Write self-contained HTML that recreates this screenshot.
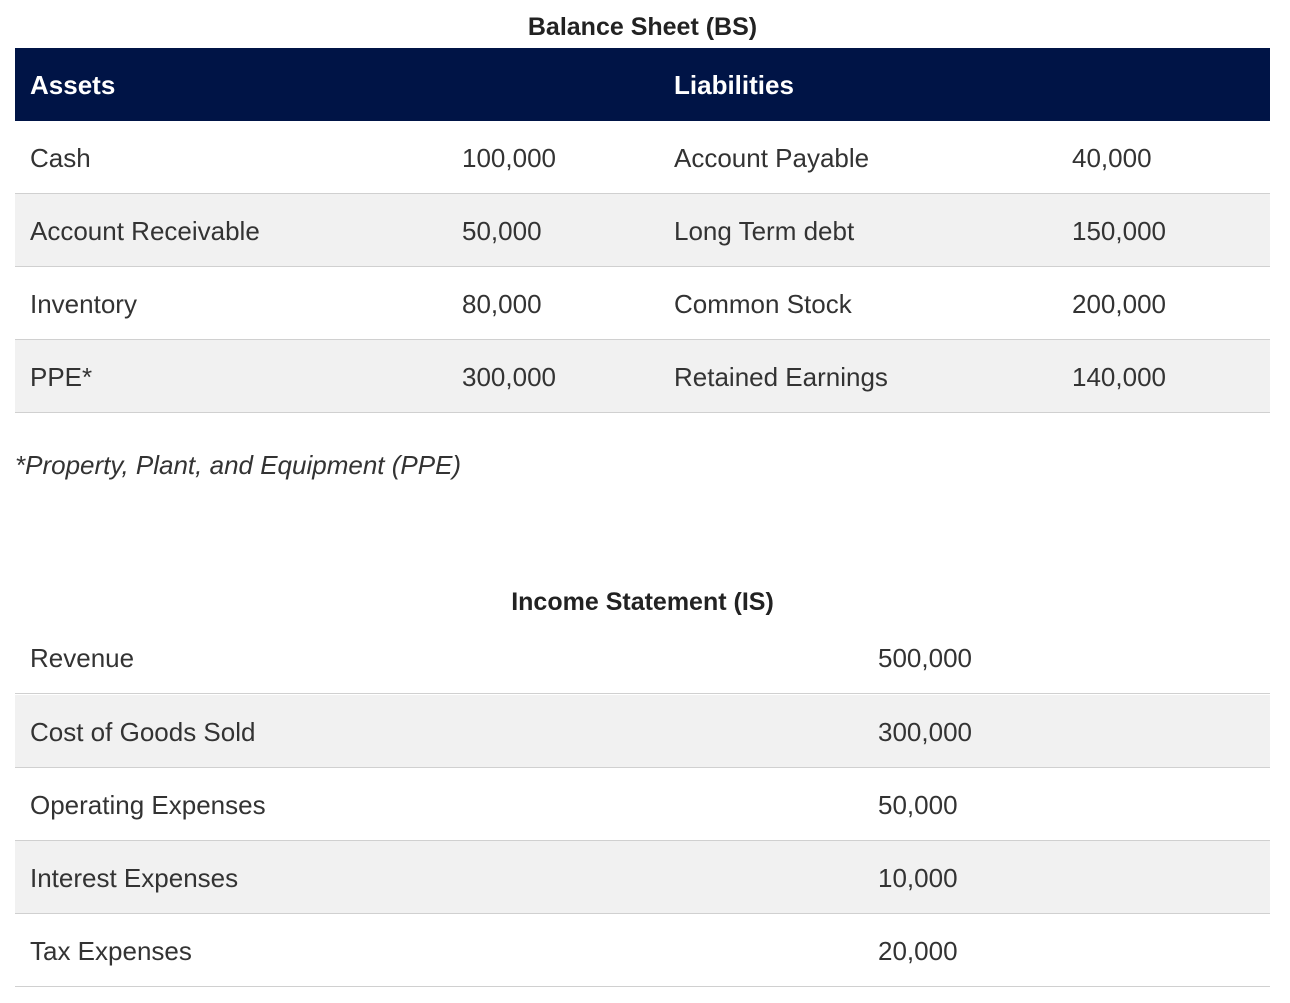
<!DOCTYPE html>
<html><head><meta charset="utf-8"><style>
body{margin:0;background:#fff;font-family:"Liberation Sans",sans-serif;color:#333;width:1290px;height:1003px;position:relative;overflow:hidden}
.t{position:absolute;left:15px;width:1255px;text-align:center;font-weight:bold;font-size:25px;color:#222}
.row{position:absolute;left:15px;width:1255px;height:72px;border-bottom:1px solid #d0d0d0;font-size:26px}
.row span{position:absolute;top:0;line-height:75px;white-space:nowrap}
.g{background:#f1f1f1}
.hd{background:#001446;color:#fff;font-weight:bold;border:none;height:73px}
</style></head><body>
<div class="t" style="top:13px">Balance Sheet (BS)</div>
<div class="row hd" style="top:48px"><span style="left:15px">Assets</span><span style="left:659px">Liabilities</span></div>
<div class="row" style="top:121px"><span style="left:15px">Cash</span><span style="left:447px">100,000</span><span style="left:659px">Account Payable</span><span style="left:1057px">40,000</span></div>
<div class="row g" style="top:194px"><span style="left:15px">Account Receivable</span><span style="left:447px">50,000</span><span style="left:659px">Long Term debt</span><span style="left:1057px">150,000</span></div>
<div class="row" style="top:267px"><span style="left:15px">Inventory</span><span style="left:447px">80,000</span><span style="left:659px">Common Stock</span><span style="left:1057px">200,000</span></div>
<div class="row g" style="top:340px"><span style="left:15px">PPE*</span><span style="left:447px">300,000</span><span style="left:659px">Retained Earnings</span><span style="left:1057px">140,000</span></div>
<div style="position:absolute;left:15px;top:450px;font-size:26px;font-style:italic">*Property, Plant, and Equipment (PPE)</div>
<div class="t" style="top:588px">Income Statement (IS)</div>
<div class="row" style="top:621px"><span style="left:15px">Revenue</span><span style="left:863px">500,000</span></div>
<div class="row g" style="top:695px"><span style="left:15px">Cost of Goods Sold</span><span style="left:863px">300,000</span></div>
<div class="row" style="top:768px"><span style="left:15px">Operating Expenses</span><span style="left:863px">50,000</span></div>
<div class="row g" style="top:841px"><span style="left:15px">Interest Expenses</span><span style="left:863px">10,000</span></div>
<div class="row" style="top:914px"><span style="left:15px">Tax Expenses</span><span style="left:863px">20,000</span></div>
</body></html>
